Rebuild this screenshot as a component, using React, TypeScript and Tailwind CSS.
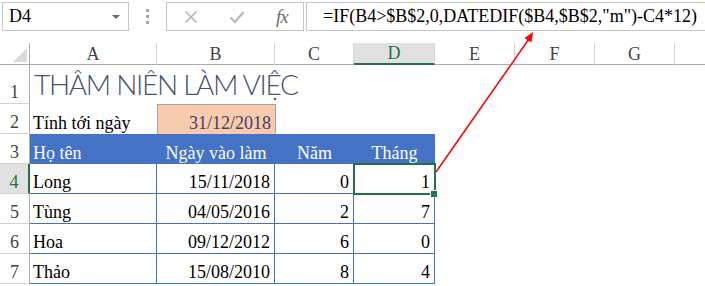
import React from "react";

const serif = { fontFamily: '"Liberation Serif", "Times New Roman", serif' };

const cols = [
  { key: "A", w: "w-[127px]" },
  { key: "B", w: "w-[118px]" },
  { key: "C", w: "w-[79px]" },
  { key: "D", w: "w-[81px]" },
  { key: "E", w: "w-[80px]" },
  { key: "F", w: "w-[80px]" },
  { key: "G", w: "w-[80px]" },
];

const people = [
  { name: "Long", start: "15/11/2018", years: 0, months: 1 },
  { name: "Tùng", start: "04/05/2016", years: 2, months: 7 },
  { name: "Hoa", start: "09/12/2012", years: 6, months: 0 },
  { name: "Thảo", start: "15/08/2010", years: 8, months: 4 },
];

function RowHead({ n, h, active }: { n: number; h: string; active?: boolean }) {
  return (
    <div
      className={[
        "w-[30px] shrink-0 flex items-end justify-center pb-[1px] border-b border-b-[#d4d4d4] text-[18px] leading-[20px]",
        h,
        active
          ? "bg-[#e1e1e1] text-[#217346] border-r-2 border-r-[#217346]"
          : "bg-white text-[#444] border-r border-r-[#ababab]",
      ].join(" ")}
    >
      {n}
    </div>
  );
}

export default function App() {
  return (
    <div className="relative w-[705px] h-[286px] overflow-hidden bg-white text-black" style={serif}>
      {/* formula toolbar */}
      <div className="h-[43px] flex items-start pt-[2px] pl-[2px]">
        <div className="w-[127px] h-[29px] border border-[#c6c6c6] flex items-center justify-between pl-[6px] pr-[8px] text-[18px]">
          <span>D4</span>
          <span className="w-0 h-0 border-l-[4px] border-r-[4px] border-t-[4px] border-l-transparent border-r-transparent border-t-[#6b6b6b]" />
        </div>
        <div className="w-[37px] h-[29px] flex flex-col items-center justify-center gap-[3px]">
          <span className="w-[3px] h-[3px] bg-[#a6a6a6]" />
          <span className="w-[3px] h-[3px] bg-[#a6a6a6]" />
          <span className="w-[3px] h-[3px] bg-[#a6a6a6]" />
        </div>
        <div className="w-[138px] h-[29px] border border-[#c6c6c6] flex items-center pl-[17px]">
          <svg width="14" height="14" viewBox="0 0 14 14" className="mr-[31px]">
            <path d="M1.5 1.5 L12.5 12.5 M12.5 1.5 L1.5 12.5" stroke="#b4b4b4" strokeWidth="1.6" fill="none" />
          </svg>
          <svg width="16" height="14" viewBox="0 0 16 14" className="mr-[31px]">
            <path d="M1.5 7.5 L6 12 L14.5 2" stroke="#b4b4b4" strokeWidth="2" fill="none" />
          </svg>
          <span className="italic text-[19px] text-[#6e6e6e] leading-none tracking-[-1px]">fx</span>
        </div>
        <div className="ml-[2px] flex-1 h-[29px] border border-r-0 border-[#c6c6c6] flex items-center pl-[16px] text-[18px] whitespace-nowrap">
          =IF(B4&gt;$B$2,0,DATEDIF($B4,$B$2,"m")-C4*12)
        </div>
      </div>

      {/* column headers */}
      <div className="flex h-[22px]">
        <div className="w-[30px] shrink-0 flex items-end justify-end pr-[2px] pb-[2px] border-r border-r-[#ababab] border-b border-b-[#ababab]">
          <svg width="14" height="14" viewBox="0 0 14 14">
            <path d="M14 0 L14 14 L0 14 Z" fill="#dadada" />
          </svg>
        </div>
        {cols.map((c) => (
          <div
            key={c.key}
            className={[
              c.w,
              "shrink-0 flex items-center justify-center text-[18px] leading-none border-r border-r-[#d4d4d4]",
              c.key === "D"
                ? "bg-[#e1e1e1] text-[#217346] border-b-2 border-b-[#217346]"
                : "text-[#444] border-b border-b-[#ababab]",
            ].join(" ")}
          >
            {c.key}
          </div>
        ))}
        <div className="flex-1 border-b border-b-[#ababab]" />
      </div>

      {/* row 1 */}
      <div className="flex">
        <RowHead n={1} h="h-[39px]" />
        <div className="flex-1 h-[39px] flex items-end pl-[4px] pb-[3px]">
          <span
            className="text-[28px] leading-[34px] text-[#44546a] whitespace-nowrap font-light tracking-[-1.3px]"
            style={{ fontFamily: 'Lato, "Liberation Sans", sans-serif' }}
          >
            THÂM NIÊN LÀM VIỆC
          </span>
        </div>
      </div>

      {/* row 2 */}
      <div className="flex">
        <RowHead n={2} h="h-[30px]" />
        <div className="w-[127px] h-[30px] flex items-end pl-[3px] pb-[1px] text-[18px] leading-[20px] whitespace-nowrap">
          Tính tới ngày
        </div>
        <div className="w-[119px] h-[30px] bg-[#f8cbad] border border-b-0 border-[#a6a6a6] flex items-end justify-end pr-[4px] pb-[1px] text-[18px] leading-[20px] text-[#3f3d66]">
          31/12/2018
        </div>
      </div>

      {/* row 3: table header */}
      <div className="flex">
        <RowHead n={3} h="h-[30px]" />
        <div className="flex h-[30px] bg-[#4472c4] text-white text-[18px] leading-[20px]">
          <div className="w-[127px] flex items-end pl-[3px] pb-[1px]">Họ tên</div>
          <div className="w-[118px] flex items-end justify-center pb-[1px]">Ngày vào làm</div>
          <div className="w-[79px] flex items-end justify-center pb-[1px]">Năm</div>
          <div className="w-[81px] flex items-end justify-center pb-[1px]">Tháng</div>
        </div>
      </div>

      {/* data rows */}
      {people.map((p, i) => (
        <div key={p.name} className="flex">
          <RowHead n={i + 4} h="h-[30px]" active={i === 0} />
          <div className="flex h-[30px] text-[18px] leading-[20px]">
            <div className="w-[127px] flex items-end pl-[3px] pb-[1px] border-r border-b border-[#4472c4]">{p.name}</div>
            <div className="w-[118px] flex items-end justify-end pr-[4px] pb-[1px] border-r border-b border-[#4472c4]">{p.start}</div>
            <div className="w-[79px] flex items-end justify-end pr-[4px] pb-[1px] border-r border-b border-[#4472c4]">{p.years}</div>
            <div className="relative w-[81px] flex items-end justify-end pr-[4px] pb-[1px] border-r border-b border-[#4472c4]">
              {p.months}
              {i === 0 && (
                <>
                  <span className="absolute left-[-1px] top-[-1px] right-[-2px] bottom-[-2px] border-2 border-[#217346]" />
                  <span className="absolute right-[-4px] bottom-[-5px] w-[6px] h-[6px] bg-[#217346] border border-white box-content" />
                </>
              )}
            </div>
          </div>
        </div>
      ))}

      {/* red arrow annotation */}
      <svg className="absolute left-0 top-0 pointer-events-none" width="705" height="286">
        <line x1="436" y1="172" x2="529" y2="39" stroke="#ff0000" strokeWidth="1.5" />
        <path d="M533 32 L524.5 38 L531.5 42.5 Z" fill="#ff0000" />
      </svg>
    </div>
  );
}
